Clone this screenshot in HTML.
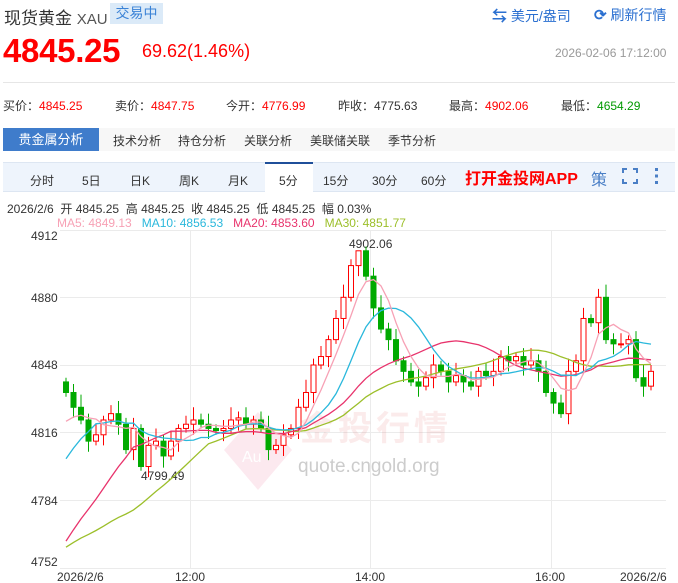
<!DOCTYPE html>
<html><head><meta charset="utf-8"><style>
*{margin:0;padding:0;box-sizing:border-box}
body{width:678px;height:583px;overflow:hidden;background:#fff;font-family:"Liberation Sans","Noto Sans CJK SC",sans-serif;color:#333;position:relative}
.a{position:absolute;white-space:nowrap}
</style></head><body>
<div class="a" style="left:4px;top:4px;font-size:17px;color:#333">现货黄金 <span style="font-size:15px;color:#555">XAU</span></div>
<div class="a" style="left:110px;top:3px;width:53px;height:21px;background:#dbeaf8;color:#3a82d6;font-size:14px;line-height:21px;text-align:center">交易中</div>
<div class="a" style="left:492px;top:5px;font-size:14px;color:#2a6fd0"><b style="font-size:15px">⇆</b> 美元/盎司</div>
<div class="a" style="left:594px;top:5px;font-size:14px;color:#2a6fd0"><span style="font-size:15px;font-weight:bold">⟳</span> 刷新行情</div>
<div class="a" style="left:3px;top:32px;font-size:33px;font-weight:bold;color:#f00;letter-spacing:-0.3px">4845.25</div>
<div class="a" style="left:142px;top:41px;font-size:18px;color:#f00">69.62(1.46%)</div>
<div class="a" style="left:555px;top:46px;font-size:12px;color:#999">2026-02-06 17:12:00</div>
<div class="a" style="left:3px;top:82px;width:672px;height:1px;background:#e6e6e6"></div>
<div class="a" style="top:97px;left:3px;font-size:12px;color:#333">买价：<span style="color:#f00">4845.25</span></div>
<div class="a" style="top:97px;left:115px;font-size:12px;color:#333">卖价：<span style="color:#f00">4847.75</span></div>
<div class="a" style="top:97px;left:226px;font-size:12px;color:#333">今开：<span style="color:#f00">4776.99</span></div>
<div class="a" style="top:97px;left:338px;font-size:12px;color:#333">昨收：4775.63</div>
<div class="a" style="top:97px;left:449px;font-size:12px;color:#333">最高：<span style="color:#f00">4902.06</span></div>
<div class="a" style="top:97px;left:561px;font-size:12px;color:#333">最低：<span style="color:#090">4654.29</span></div>
<div class="a" style="left:3px;top:128px;width:672px;height:23px;background:#f7f7f7"></div>
<div class="a" style="left:3px;top:128px;width:96px;height:23px;background:#3f7ccb;color:#fff;font-size:13px;line-height:23px;text-align:center">贵金属分析</div>
<div class="a" style="left:113px;top:132px;font-size:12px">技术分析</div>
<div class="a" style="left:178px;top:132px;font-size:12px">持仓分析</div>
<div class="a" style="left:244px;top:132px;font-size:12px">关联分析</div>
<div class="a" style="left:310px;top:132px;font-size:12px">美联储关联</div>
<div class="a" style="left:388px;top:132px;font-size:12px">季节分析</div>
<div class="a" style="left:3px;top:162px;width:672px;height:30px;background:#eef4fc;border-top:1px solid #dde6f2;border-bottom:1px solid #dde6f2"></div>
<div class="a" style="left:265px;top:162px;width:48px;height:30px;background:#fff;border-top:2px solid #1f4f9a"></div>
<div class="a" style="top:172px;left:30px;font-size:12px">分时</div>
<div class="a" style="top:172px;left:82px;font-size:12px">5日</div>
<div class="a" style="top:172px;left:130px;font-size:12px">日K</div>
<div class="a" style="top:172px;left:179px;font-size:12px">周K</div>
<div class="a" style="top:172px;left:228px;font-size:12px">月K</div>
<div class="a" style="top:172px;left:279px;font-size:12px">5分</div>
<div class="a" style="top:172px;left:323px;font-size:12px">15分</div>
<div class="a" style="top:172px;left:372px;font-size:12px">30分</div>
<div class="a" style="top:172px;left:421px;font-size:12px">60分</div>
<div class="a" style="top:165px;left:465px;font-size:16px;font-weight:bold;color:#f00">打开金投网APP</div>
<div class="a" style="top:166px;left:591px;font-size:16px;color:#4a7fc6">策</div>
<svg class="a" style="left:622px;top:168px" width="16" height="16"><path d="M1 5V1H5M11 1H15V5M15 11V15H11M5 15H1V11" fill="none" stroke="#4a7fc6" stroke-width="2"/></svg>
<svg class="a" style="left:654px;top:167px" width="6" height="18"><rect x="1" y="1" width="3" height="3" fill="#4a7fc6"/><rect x="1" y="7.5" width="3" height="3" fill="#4a7fc6"/><rect x="1" y="14" width="3" height="3" fill="#4a7fc6"/></svg>
<div class="a" style="top:200px;left:7px;font-size:12px;color:#333">2026/2/6 &nbsp;开 4845.25 &nbsp;高 4845.25 &nbsp;收 4845.25 &nbsp;低 4845.25 &nbsp;幅 0.03%</div>
<div class="a" style="top:216px;left:57px;font-size:12px"><span style="color:#f7a1b5">MA5: 4849.13</span> &nbsp; <span style="color:#2ab8dc">MA10: 4856.53</span> &nbsp; <span style="color:#e8336c">MA20: 4853.60</span> &nbsp; <span style="color:#9cbf2a">MA30: 4851.77</span></div>
<svg id="ch" class="a" style="left:0;top:0" width="678" height="583">
<g stroke="#ebebeb" stroke-width="1">
<line x1="60" x2="666" y1="230.5" y2="230.5"/><line x1="60" x2="666" y1="297.5" y2="297.5"/><line x1="60" x2="666" y1="365.5" y2="365.5"/><line x1="60" x2="666" y1="432.5" y2="432.5"/><line x1="60" x2="666" y1="500.5" y2="500.5"/><line x1="60" x2="666" y1="568.5" y2="568.5"/>
<line x1="190.5" x2="190.5" y1="230" y2="568"/><line x1="370.5" x2="370.5" y1="230" y2="568"/><line x1="551.5" x2="551.5" y1="230" y2="568"/>
</g>
<g font-size="12" fill="#333" font-family="Liberation Sans,sans-serif">
<text x="31" y="240">4912</text><text x="31" y="302">4880</text><text x="31" y="369">4848</text><text x="31" y="437">4816</text><text x="31" y="505">4784</text><text x="31" y="566">4752</text>
<text x="57" y="581">2026/2/6</text><text x="175" y="581">12:00</text><text x="355" y="581">14:00</text><text x="535" y="581">16:00</text><text x="620" y="581">2026/2/6</text>
<text x="349" y="248">4902.06</text><text x="141" y="480">4799.49</text>
</g>
<g opacity="0.1">
<path d="M258 412L292 450L258 490L224 450Z" fill="#e8336c"/>
<text x="242" y="462" font-size="16" fill="#fff">Au</text>
<text x="300" y="440" font-size="34" fill="#d44" font-family="Noto Sans CJK SC,sans-serif" font-weight="bold" letter-spacing="4">金投行情</text>
</g>
<text x="298" y="472" font-size="19" fill="#ccc" font-family="Liberation Sans,sans-serif">quote.cngold.org</text>
<g id="cd"></g>
</svg>
<script>
var C=[4835,4828,4822,4812,4815,4822,4825,4820,4808,4818,4800,4810,4812,4805,4812,4818,4820,
4822,4820,4818,4817,4818,4822,4823,4820,4822,4818,4808,4810,
4815,4818,4828,4835,4848,4852,4860,4870,4880,4895,4902,4890,
4875,4865,4860,4850,4845,4840,4838,4842,4848,4845,4840,4843,
4840,4838,4845,4843,4845,4852,4850,4852,4848,4850,4845,4835,
4830,4825,4845,4850,4870,4868,4880,4860,4858,4858,4860,4842,4838,4845];
var P=[];for(var i=0;i<10;i++)P.push(4760);for(i=0;i<10;i++)P.push(4720);for(i=0;i<5;i++)P.push(4778);for(i=0;i<5;i++)P.push(4818);
var A=P.concat(C);
function Y(p){return 365-(p-4848)*2.115}
function X(i){return 66+i*7.5}
var s='',o=4840;
for(i=0;i<C.length;i++){var c=C[i],up=c>=o,col=up?'#f00':'#0a0';var hi=Math.max(o,c)+2+(i*7%5),lo=Math.min(o,c)-2-(i*3%6);
if(i==39)hi=4902.06;if(i==13)lo=4799.5;
var x=X(i);s+='<line x1="'+x+'" x2="'+x+'" y1="'+Y(hi)+'" y2="'+Y(lo)+'" stroke="'+col+'"/>';
var t=Y(Math.max(o,c)),h=Math.max(1,Y(Math.min(o,c))-t);
s+='<rect x="'+(x-2.5)+'" y="'+t+'" width="5" height="'+h+'" fill="'+(up?'#fff':col)+'" stroke="'+col+'"/>';o=c;}
function ma(n,col){var d='';for(var i=0;i<C.length;i++){var k=i+30,sm=0;for(var j=k-n+1;j<=k;j++)sm+=A[j];d+=(i?'L':'M')+X(i).toFixed(1)+' '+Y(sm/n).toFixed(1);}return '<path d="'+d+'" fill="none" stroke="'+col+'" stroke-width="1.3"/>';}
s+=ma(30,'#9cbf2a')+ma(20,'#e8336c')+ma(10,'#2ab8dc')+ma(5,'#f7a1b5');
document.getElementById('cd').innerHTML=s;
</script>
</body></html>
